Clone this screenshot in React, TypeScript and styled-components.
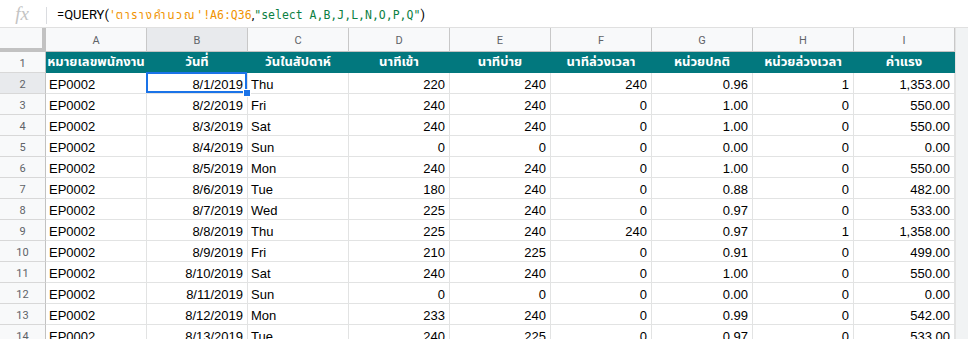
import React from 'react';
import styled, { createGlobalStyle, css } from 'styled-components';

const GlobalStyle = createGlobalStyle`
  body {
    margin: 0;
    background: #fff;
    font-family: 'Liberation Sans', Arial, 'Noto Sans Thai', 'Noto Sans', sans-serif;
  }
`;

const Page = styled.div`
  width: 968px;
  height: 339px;
  overflow: hidden;
`;

const FormulaBar = styled.div`
  display: flex;
  align-items: center;
  height: 28px;
  padding-top: 3px;
  box-sizing: border-box;
  border-bottom: 1px solid #e0e0e0;
`;

const FxLabel = styled.div`
  width: 44px;
  text-align: center;
  font-family: 'Liberation Serif', serif;
  font-style: italic;
  font-size: 19px;
  color: #c4c4c4;
  padding-right: 2px;
  margin-top: -2px;
`;

const Divider = styled.div`
  width: 1px;
  height: 17px;
  background: #dadce0;
  margin-right: 10px;
`;

const Formula = styled.div`
  font-family: Roboto, 'Noto Sans Thai', 'Noto Sans', sans-serif;
  font-size: 13px;
  color: #000;
  white-space: pre;
`;

const Token = styled.span<{ $kind: 'ref' | 'str' }>`
  font-family: 'DejaVu Sans Mono', 'Noto Sans Thai', 'Noto Sans', monospace;
  font-size: 11.5px;
  color: ${(p) => (p.$kind === 'ref' ? '#f09300' : '#0b8043')};
`;

const ThaiName = styled.span`
  letter-spacing: 1.9px;
`;

const Grid = styled.div`
  display: grid;
  grid-template-columns: 46px repeat(9, 101px) 1fr;
  grid-template-rows: 24px repeat(14, 21px);
`;

const Corner = styled.div`
  background: #f8f9fa;
  box-sizing: border-box;
  border-right: 4px solid #c2c2c2;
  border-bottom: 4px solid #c2c2c2;
`;

const ColHeader = styled.div<{ $selected?: boolean }>`
  display: flex;
  align-items: center;
  justify-content: center;
  box-sizing: border-box;
  padding-top: 1px;
  background: ${(p) => (p.$selected ? '#e8eaed' : '#f8f9fa')};
  border-right: 1px solid #c8c8c8;
  border-bottom: 1px solid #c2c2c2;
  font-family: Roboto, sans-serif;
  font-size: 11px;
  color: #5f6368;
`;

const RowHeader = styled.div<{ $selected?: boolean }>`
  display: flex;
  align-items: center;
  justify-content: center;
  box-sizing: border-box;
  padding-top: 2px;
  background: ${(p) => (p.$selected ? '#e8eaed' : '#f8f9fa')};
  border-right: 1px solid #c2c2c2;
  border-bottom: 1px solid #d8d8d8;
  font-family: Roboto, sans-serif;
  font-size: 11px;
  color: #5f6368;
`;

const Cell = styled.div<{ $align?: 'left' | 'right' | 'center'; $head?: boolean; $selected?: boolean }>`
  position: relative;
  box-sizing: border-box;
  padding: 4px 4px 0 3px;
  line-height: 16px;
  font-size: 13px;
  color: #000;
  white-space: nowrap;
  text-align: ${(p) => p.$align || 'left'};
  border-right: 1px solid #e2e3e3;
  border-bottom: 1px solid #e2e3e3;

  ${(p) =>
    p.$head &&
    css`
      background: #02787e;
      border-color: #02787e;
      color: #fff;
      font-weight: bold;
      font-family: 'Noto Sans Thai', 'Noto Sans', sans-serif;
      line-height: 20px;
      padding: 0 1px;
      text-align: center;
      overflow: hidden;
    `}

  ${(p) =>
    p.$selected &&
    css`
      &::after {
        content: '';
        position: absolute;
        inset: -1px 0 0 -1px;
        border: 2px solid #1a73e8;
      }
      &::before {
        content: '';
        position: absolute;
        right: -4px;
        bottom: -4px;
        width: 6px;
        height: 6px;
        background: #1a73e8;
        border: 1px solid #fff;
        z-index: 2;
      }
    `}
`;

const Gutter = styled.div`
  grid-column: 11;
  grid-row: 1 / span 15;
  background: #f1f3f4;
  border-left: 1px solid #e3e3e3;
`;

const columns = ['A', 'B', 'C', 'D', 'E', 'F', 'G', 'H', 'I'];

const headings = [
  'หมายเลขพนักงาน',
  'วันที่',
  'วันในสัปดาห์',
  'นาทีเข้า',
  'นาทีบ่าย',
  'นาทีล่วงเวลา',
  'หน่วยปกติ',
  'หน่วยล่วงเวลา',
  'ค่าแรง',
];

const rows: string[][] = [
  ['8/1/2019', 'Thu', '220', '240', '240', '0.96', '1', '1,353.00'],
  ['8/2/2019', 'Fri', '240', '240', '0', '1.00', '0', '550.00'],
  ['8/3/2019', 'Sat', '240', '240', '0', '1.00', '0', '550.00'],
  ['8/4/2019', 'Sun', '0', '0', '0', '0.00', '0', '0.00'],
  ['8/5/2019', 'Mon', '240', '240', '0', '1.00', '0', '550.00'],
  ['8/6/2019', 'Tue', '180', '240', '0', '0.88', '0', '482.00'],
  ['8/7/2019', 'Wed', '225', '240', '0', '0.97', '0', '533.00'],
  ['8/8/2019', 'Thu', '225', '240', '240', '0.97', '1', '1,358.00'],
  ['8/9/2019', 'Fri', '210', '225', '0', '0.91', '0', '499.00'],
  ['8/10/2019', 'Sat', '240', '240', '0', '1.00', '0', '550.00'],
  ['8/11/2019', 'Sun', '0', '0', '0', '0.00', '0', '0.00'],
  ['8/12/2019', 'Mon', '233', '240', '0', '0.99', '0', '542.00'],
  ['8/13/2019', 'Tue', '240', '225', '0', '0.97', '0', '533.00'],
];

const App: React.FC = () => {
  return (
    <Page>
      <GlobalStyle />
      <FormulaBar>
        <FxLabel>fx</FxLabel>
        <Divider />
        <Formula>
          =QUERY(<Token $kind="ref">'<ThaiName>ตารางคำนวณ</ThaiName>'!A6:Q36</Token>,
          <Token $kind="str">"select A,B,J,L,N,O,P,Q"</Token>)
        </Formula>
      </FormulaBar>
      <Grid>
        <Gutter />
        <Corner />
        {columns.map((c) => (
          <ColHeader key={c} $selected={c === 'B'}>
            {c}
          </ColHeader>
        ))}

        <RowHeader>1</RowHeader>
        {headings.map((h) => (
          <Cell key={h} $head>
            {h}
          </Cell>
        ))}

        {rows.map((r, i) => (
          <React.Fragment key={i}>
            <RowHeader $selected={i === 0}>{i + 2}</RowHeader>
            <Cell>EP0002</Cell>
            <Cell $align="right" $selected={i === 0}>
              {r[0]}
            </Cell>
            <Cell>{r[1]}</Cell>
            {r.slice(2).map((v, j) => (
              <Cell key={j} $align="right">
                {v}
              </Cell>
            ))}
          </React.Fragment>
        ))}
      </Grid>
    </Page>
  );
};

export default App;
